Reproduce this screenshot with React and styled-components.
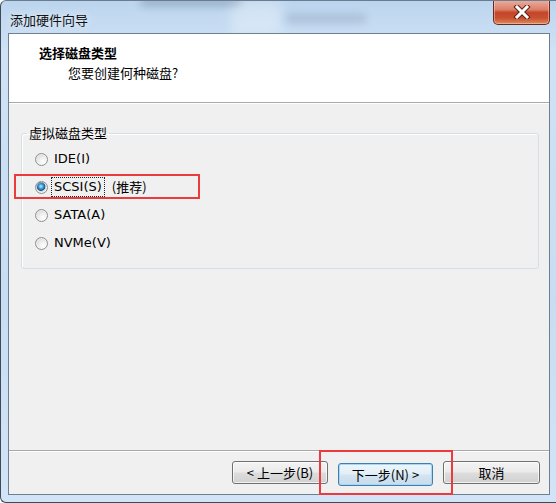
import React from "react";
import styled, { createGlobalStyle } from "styled-components";

const Global = createGlobalStyle`
  html, body { margin: 0; padding: 0; background: #fff; }
  body { font-family: "Noto Sans CJK SC", "DejaVu Sans", sans-serif; }
  * { box-sizing: border-box; }
`;

const CJK = `"Noto Sans CJK SC", "Noto Sans", sans-serif`;
const LATIN = `"DejaVu Sans", "Noto Sans CJK SC", sans-serif`;

const Window = styled.div`
  position: relative;
  width: 556px;
  height: 503px;
  display: flex;
  flex-direction: column;
  overflow: hidden;
  background: linear-gradient(180deg, #bcd5ee 0%, #cfe2f6 10%, #c8ddf3 60%, #d2e4f7 100%);
  border-left: 1px solid #3f4a56;
  border-top: 1px solid #6b7c8e;
  border-bottom: 1px solid #3f4a56;
  border-radius: 6px 0 0 6px;
`;

const Blur = styled.div`
  position: absolute;
  left: ${(p) => p.$x}px;
  top: ${(p) => p.$y}px;
  width: ${(p) => p.$w}px;
  height: ${(p) => p.$h}px;
  background: ${(p) => p.$c};
  filter: blur(${(p) => p.$b}px);
  opacity: ${(p) => p.$o};
  pointer-events: none;
`;

const TitleBar = styled.div`
  position: relative;
  height: 32px;
  display: flex;
  align-items: flex-start;
  padding-left: 9px;
  flex-shrink: 0;
`;

const TitleText = styled.div`
  font-family: ${CJK};
  font-size: 13px;
  line-height: 18px;
  padding-top: 10px;
  color: #111;
  text-shadow: 0 0 8px rgba(255, 255, 255, 0.9);
  flex: 1;
`;

const CloseButton = styled.div`
  width: 57px;
  height: 25px;
  margin-top: -1px;
  margin-right: 6px;
  display: flex;
  align-items: center;
  justify-content: center;
  border: 1px solid #6b2a1e;
  border-top: none;
  border-radius: 0 0 5px 5px;
  background: linear-gradient(180deg, #eab0a2 0%, #dc7f68 40%, #c5462b 52%, #c9502f 75%, #de8a5e 100%);
  box-shadow: inset 0 0 0 1px rgba(255, 220, 210, 0.45);
`;

const Client = styled.div`
  flex: 1;
  display: flex;
  flex-direction: column;
  margin: 0 6px 7px 7px;
  border: 1px solid #6e7f90;
  background: #f0f0f0;
  position: relative;
  z-index: 1;
`;

const Header = styled.div`
  height: 69px;
  flex-shrink: 0;
  background: #fff;
  border-bottom: 1px solid #a9a9a9;
  box-shadow: 0 1px 0 #fff;
  padding: 10px 0 0 30px;
`;

const HeaderTitle = styled.div`
  font-family: ${CJK};
  font-size: 13px;
  font-weight: 700;
  line-height: 17px;
  color: #000;
`;

const HeaderSub = styled.div`
  font-family: ${CJK};
  font-size: 13px;
  line-height: 17px;
  margin: 3px 0 0 29px;
  color: #000;
`;

const Body = styled.div`
  flex: 1;
  padding: 21px 10px 0 12px;
`;

const GroupBox = styled.fieldset`
  margin: 0;
  padding: 3px 0 11px 13px;
  min-inline-size: 0;
  border: 1px solid #d5dfe5;
  border-radius: 3px;
  box-shadow: inset 1px 1px 0 #fff;
`;

const Legend = styled.legend`
  font-family: ${CJK};
  font-size: 13px;
  line-height: 18px;
  padding: 0 2px;
  margin-left: -8px;
  color: #000;
`;

const RadioRow = styled.div`
  position: relative;
  height: 28px;
  display: flex;
  align-items: center;
`;

const RadioCircle = styled.span`
  width: 13px;
  height: 13px;
  border-radius: 50%;
  flex-shrink: 0;
  border: 1px solid #8d8f91;
  background: ${(p) =>
    p.$checked
      ? "radial-gradient(circle at 45% 40%, #c6eaff 0%, #3f9ad8 26%, #175c8f 46%, #dcdcdc 54%, #f4f4f4 100%)"
      : "radial-gradient(circle at 65% 70%, #ffffff 0%, #eeeeee 40%, #cdcdcd 100%)"};
  box-shadow: inset 0 0 0 1px rgba(255, 255, 255, 0.5);
`;

const RadioLabel = styled.span`
  font-family: ${LATIN};
  font-size: 13px;
  line-height: 16px;
  color: #000;
  margin-left: 5px;
  padding: 0 1px;
  outline: ${(p) => (p.$focus ? "1px dotted #222" : "none")};
  outline-offset: 1px;
`;

const Recommend = styled.span`
  font-family: ${CJK};
  font-size: 13px;
  line-height: 16px;
  margin-left: 9px;
  color: #000;
`;

const Highlight = styled.div`
  position: absolute;
  left: ${(p) => p.$l}px;
  top: ${(p) => p.$t}px;
  width: ${(p) => p.$w}px;
  height: ${(p) => p.$h}px;
  border: 2px solid #ec3b3d;
  pointer-events: none;
  z-index: 5;
`;

const Footer = styled.div`
  flex-shrink: 0;
  display: flex;
  justify-content: flex-end;
  gap: 10px;
  padding: 10px 9px 8px 0;
  border-top: 1px solid #a9a9a9;
  box-shadow: inset 0 1px 0 #fff;
`;

const ButtonWrap = styled.div`
  position: relative;
`;

const Button = styled.button`
  width: ${(p) => p.$w}px;
  height: 23px;
  padding: 0;
  font-family: ${CJK};
  font-size: 13px;
  line-height: 21px;
  color: #000;
  border-radius: 3px;
  border: 1px solid ${(p) => (p.$default ? "#3c7fb1" : "#707070")};
  background: ${(p) =>
    p.$default
      ? "linear-gradient(180deg, #eef6fb 0%, #e2eef7 48%, #d3e4f1 52%, #c8dcec 100%)"
      : "linear-gradient(180deg, #f3f3f3 0%, #ebebeb 48%, #dddddd 52%, #d0d0d0 100%)"};
  box-shadow: inset 0 0 0 1px ${(p) => (p.$default ? "#a9d6f3" : "rgba(255,255,255,0.7)")};
`;

const radios = [
  { label: "IDE(I)" },
  { label: "SCSI(S)", checked: true, recommend: "(推荐)" },
  { label: "SATA(A)" },
  { label: "NVMe(V)" },
];

function CloseIcon() {
  return (
    <svg width="18" height="14" viewBox="0 0 18 14">
      <path d="M4 2 L14 12 M14 2 L4 12" stroke="#5a2218" strokeWidth="5" strokeLinecap="square" />
      <path d="M4 2 L14 12 M14 2 L4 12" stroke="#ffffff" strokeWidth="3" strokeLinecap="square" />
    </svg>
  );
}

export default function App() {
  return (
    <>
      <Global />
      <Window>
        <Blur $x={140} $y={-4} $w={100} $h={9} $c="#2a3a55" $b={4} $o={0.25} />
        <Blur $x={230} $y={0} $w={50} $h={34} $c="#ffffff" $b={6} $o={0.3} />
        <Blur $x={285} $y={13} $w={80} $h={9} $c="#3a4a66" $b={4} $o={0.18} />
        <TitleBar>
          <TitleText>添加硬件向导</TitleText>
          <CloseButton>
            <CloseIcon />
          </CloseButton>
        </TitleBar>
        <Client>
          <Header>
            <HeaderTitle>选择磁盘类型</HeaderTitle>
            <HeaderSub>您要创建何种磁盘?</HeaderSub>
          </Header>
          <Body>
            <GroupBox>
              <Legend>虚拟磁盘类型</Legend>
              {radios.map((r) => (
                <RadioRow key={r.label}>
                  <RadioCircle $checked={r.checked} />
                  <RadioLabel $focus={r.checked}>{r.label}</RadioLabel>
                  {r.recommend && <Recommend>{r.recommend}</Recommend>}
                  {r.checked && <Highlight $l={-21} $t={1} $w={186} $h={25} />}
                </RadioRow>
              ))}
            </GroupBox>
          </Body>
          <Footer>
            <Button $w={96}>&lt; 上一步(B)</Button>
            <ButtonWrap>
              <Button $w={95} $default>下一步(N) &gt;</Button>
              <Highlight $l={-19} $t={-11} $w={134} $h={45} />
            </ButtonWrap>
            <Button $w={97}>取消</Button>
          </Footer>
        </Client>
      </Window>
    </>
  );
}
